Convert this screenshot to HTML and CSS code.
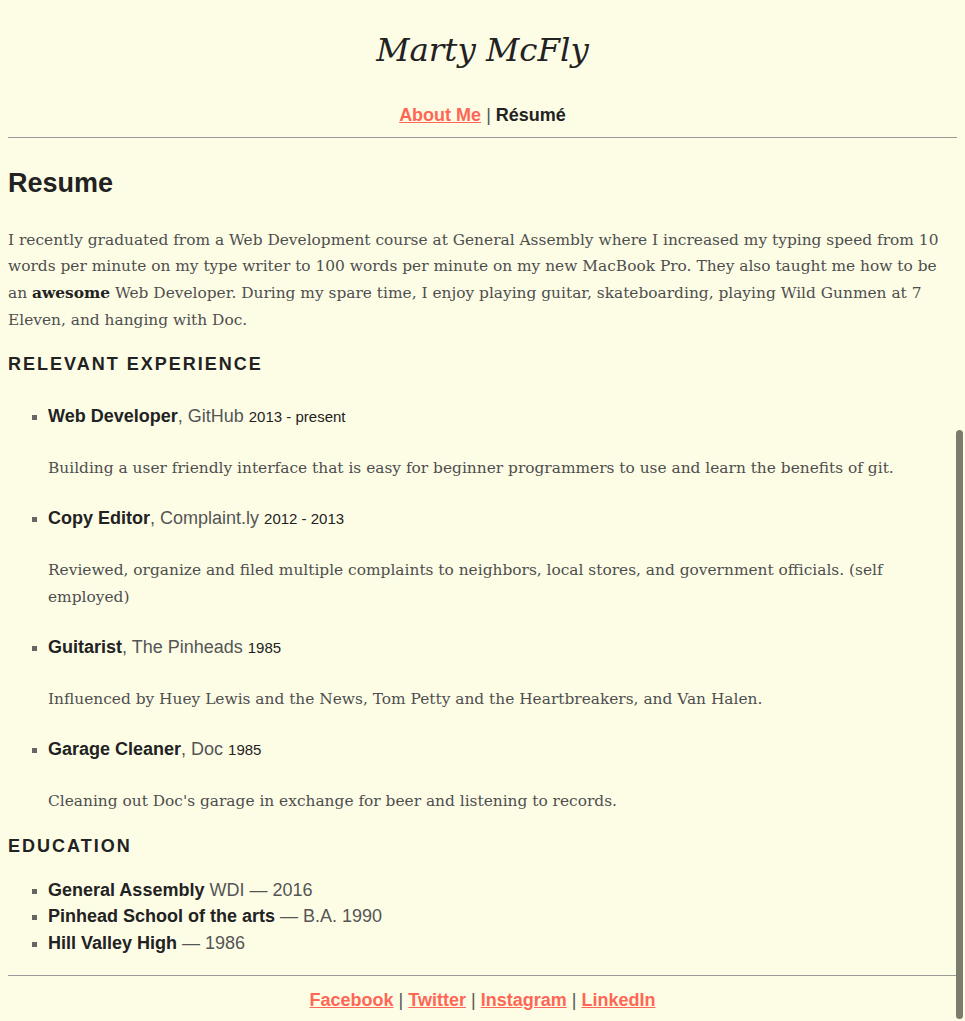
FILE: index.html
```html
<!DOCTYPE html>
<html lang="en">
<head>
<meta charset="utf-8">
<title>Marty McFly</title>
<link rel="stylesheet" href="styles.css">
</head>
<body>
<header class="site-header">
  <h1 class="site-title">Marty McFly</h1>
  <nav class="site-nav"><a href="#">About Me</a> <span class="sep">|</span> <span class="current">Résumé</span></nav>
</header>
<hr class="rule rule-top">
<main class="content">
  <h2 class="page-title">Resume</h2>
  <p class="intro">I recently graduated from a Web Development course at General Assembly where I increased my typing speed from 10 words per minute on my type writer to 100 words per minute on my new MacBook Pro. They also taught me how to be an <strong>awesome</strong> Web Developer. During my spare time, I enjoy playing guitar, skateboarding, playing Wild Gunmen at 7 Eleven, and hanging with Doc.</p>

  <h3 class="section-title">Relevant Experience</h3>
  <ul class="jobs">
    <li class="job">
      <div class="job-head"><strong>Web Developer</strong>, GitHub <small>2013 - present</small></div>
      <p class="job-desc">Building a user friendly interface that is easy for beginner programmers to use and learn the benefits of git.</p>
    </li>
    <li class="job">
      <div class="job-head"><strong>Copy Editor</strong>, Complaint.ly <small>2012 - 2013</small></div>
      <p class="job-desc">Reviewed, organize and filed multiple complaints to neighbors, local stores, and government officials. (self employed)</p>
    </li>
    <li class="job">
      <div class="job-head"><strong>Guitarist</strong>, The Pinheads <small>1985</small></div>
      <p class="job-desc">Influenced by Huey Lewis and the News, Tom Petty and the Heartbreakers, and Van Halen.</p>
    </li>
    <li class="job">
      <div class="job-head"><strong>Garage Cleaner</strong>, Doc <small>1985</small></div>
      <p class="job-desc">Cleaning out Doc's garage in exchange for beer and listening to records.</p>
    </li>
  </ul>

  <h3 class="section-title">Education</h3>
  <ul class="schools">
    <li><strong>General Assembly</strong> WDI — 2016</li>
    <li><strong>Pinhead School of the arts</strong> — B.A. 1990</li>
    <li><strong>Hill Valley High</strong> — 1986</li>
  </ul>
</main>
<hr class="rule rule-bottom">
<footer class="site-footer">
  <a href="#">Facebook</a> <span class="sep">|</span> <a href="#">Twitter</a> <span class="sep">|</span> <a href="#">Instagram</a> <span class="sep">|</span> <a href="#">LinkedIn</a>
</footer>
<div class="scrollbar" aria-hidden="true"></div>
</body>
</html>
```

FILE: styles.css
```css
html, body {
  background: #fdfde6;
}
body {
  margin: 8px;
  color: #4e4e4e;
  font-family: "DejaVu Serif", Georgia, serif;
  font-size: 15.4px;
  line-height: 26.67px;
}
.site-header {
  text-align: center;
}
.site-title {
  margin: 22px 0 35px;
  font-family: "DejaVu Serif", Georgia, serif;
  font-style: italic;
  font-weight: normal;
  font-size: 32.5px;
  line-height: 40px;
  color: #222;
}
.site-nav, .site-footer {
  font-family: "Liberation Sans", Arial, sans-serif;
  font-weight: bold;
  font-size: 18px;
  line-height: 20px;
  text-align: center;
  color: #222;
}
.site-nav a, .site-footer a {
  color: #ff6655;
}
.sep {
  color: #555;
  font-weight: normal;
}
.rule {
  border: 0;
  border-top: 1px solid #999;
  height: 0;
}
.rule-top {
  margin: 12px 0 0;
}
.rule-bottom {
  margin: 18.7px 0 0;
}
.page-title {
  font-family: "Liberation Sans", Arial, sans-serif;
  font-size: 27px;
  line-height: 32px;
  margin: 29px 0 0;
  color: #222;
}
.intro {
  margin: 27.7px 0 0;
}
.intro strong {
  color: #222;
}
.section-title {
  font-family: "Liberation Sans", Arial, sans-serif;
  font-size: 18px;
  letter-spacing: 2px;
  text-transform: uppercase;
  color: #222;
  margin: 0;
  line-height: 22px;
}
.intro + .section-title {
  margin-top: 20px;
}
.jobs, .schools {
  list-style: square;
  padding-left: 40px;
}
.jobs li::marker, .schools li::marker {
  color: #666;
  font-size: 15px;
}
.jobs {
  margin: 27.7px 0 20.7px;
}
.job-head, .schools li {
  font-family: "Liberation Sans", Arial, sans-serif;
  font-size: 18px;
  line-height: 26.67px;
  color: #555;
}
.job-head strong, .schools strong {
  color: #222;
}
.job-head small {
  font-size: 15px;
  color: #222;
}
.job-desc {
  margin: 24.3px 0 23.3px;
}
.job:last-child .job-desc {
  margin-bottom: 0;
}
.schools {
  margin: 19.7px 0 0;
}
.site-footer {
  margin-top: 14px;
}
.scrollbar {
  position: fixed;
  right: 2px;
  top: 430px;
  bottom: 2px;
  width: 7px;
  border-radius: 4px;
  background: #7c7c6c;
}
```
